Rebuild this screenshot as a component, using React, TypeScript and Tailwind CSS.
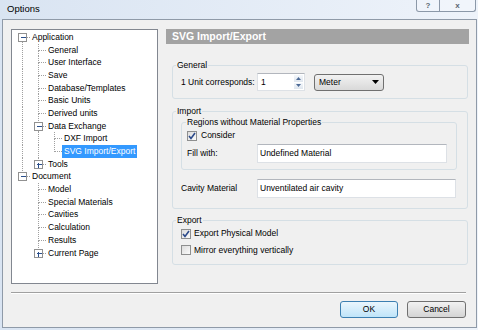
import React from 'react'

type Row = {
  label: string
  guides: boolean[]
  top: boolean
  bottom: boolean
  exp?: '+' | '-'
  selected?: boolean
}

const rows: Row[] = [
  { label: 'Application', guides: [], top: false, bottom: true, exp: '-' },
  { label: 'General', guides: [true], top: true, bottom: true },
  { label: 'User Interface', guides: [true], top: true, bottom: true },
  { label: 'Save', guides: [true], top: true, bottom: true },
  { label: 'Database/Templates', guides: [true], top: true, bottom: true },
  { label: 'Basic Units', guides: [true], top: true, bottom: true },
  { label: 'Derived units', guides: [true], top: true, bottom: true },
  { label: 'Data Exchange', guides: [true], top: true, bottom: true, exp: '-' },
  { label: 'DXF Import', guides: [true, true], top: true, bottom: true },
  { label: 'SVG Import/Export', guides: [true, true], top: true, bottom: false, selected: true },
  { label: 'Tools', guides: [true], top: true, bottom: false, exp: '+' },
  { label: 'Document', guides: [], top: true, bottom: false, exp: '-' },
  { label: 'Model', guides: [false], top: true, bottom: true },
  { label: 'Special Materials', guides: [false], top: true, bottom: true },
  { label: 'Cavities', guides: [false], top: true, bottom: true },
  { label: 'Calculation', guides: [false], top: true, bottom: true },
  { label: 'Results', guides: [false], top: true, bottom: true },
  { label: 'Current Page', guides: [false], top: true, bottom: false, exp: '+' },
]

const COL = 16

// dotted tree connectors + expander box for one row
const Connector = ({ row }: { row: Row }) => {
  const depth = row.guides.length
  const w = COL * (depth + 1)
  const cx = depth * COL + 8.5
  const dot = { stroke: '#a0a0a0', strokeDasharray: '1 1' }
  return (
    <svg width={w} height={13} viewBox={`0 0 ${w} 13`} className="shrink-0" shapeRendering="crispEdges">
      {row.guides.map((g, i) =>
        g ? <line key={i} x1={i * COL + 8.5} y1={0} x2={i * COL + 8.5} y2={13} {...dot} /> : null
      )}
      {row.top && <line x1={cx} y1={0} x2={cx} y2={6.5} {...dot} />}
      {row.bottom && <line x1={cx} y1={6.5} x2={cx} y2={13} {...dot} />}
      <line x1={cx} y1={6.5} x2={w} y2={6.5} {...dot} />
      {row.exp && (
        <g>
          <rect x={cx - 4} y={2.5} width={8} height={8} fill="#fff" stroke="#919191" />
          <line x1={cx - 2} y1={6.5} x2={cx + 3} y2={6.5} stroke="#2b4f8c" />
          {row.exp === '+' && <line x1={cx} y1={4.5} x2={cx} y2={9.5} stroke="#2b4f8c" />}
        </g>
      )}
    </svg>
  )
}

const Check = ({ checked }: { checked?: boolean }) => (
  <div className="w-[10px] h-[10px] shrink-0 border border-[#8e8f8f] bg-gradient-to-br from-[#dcdcdc] to-[#fbfbfb] flex items-center justify-center">
    {checked && (
      <svg width="8" height="8" viewBox="0 0 8 8">
        <path d="M1 4 L3 6.5 L7 1" fill="none" stroke="#2c4a8a" strokeWidth="1.6" />
      </svg>
    )}
  </div>
)

const TextBox = ({ value, className }: { value: string; className: string }) => (
  <div className={`h-[19px] bg-white border border-[#dde1e6] border-t-[#b2b6bd] flex items-center pl-[2px] whitespace-nowrap ${className}`}>
    {value}
  </div>
)

export default function App() {
  return (
    <div className="w-[478px] h-[330px] overflow-hidden relative bg-gradient-to-r from-[#d9e4f2] to-[#eef3fa] font-['Liberation_Sans',Arial,sans-serif] text-[8.5px] text-black">
      {/* title bar */}
      <div className="h-[19px] flex items-center pl-[7px] text-[9.5px]">Options</div>
      <div className="absolute top-0 right-[2px] h-[12px] w-[60px] flex border border-t-0 border-[#8b98a8] rounded-b-[3px] bg-[#f3f6fb]/60 text-[#5b6672] font-bold text-[8px] leading-none">
        <div className="w-[23px] flex items-center justify-center border-r border-[#8b98a8]">?</div>
        <div className="flex-1 flex items-center justify-center">x</div>
      </div>

      {/* client area */}
      <div className="ml-[2px] w-[475px] h-[309px] border border-[#8f9aa8] bg-[#f0f0f0] pl-[8px] pt-[9px]">
        <div className="flex gap-[8px]">
          {/* tree */}
          <div className="w-[147px] h-[255px] bg-white border border-[#828790] pl-[2px] pt-[1px]">
            {rows.map((r) => (
              <div key={r.label} className="h-[12.7px] flex items-center">
                <Connector row={r} />
                <span
                  className={`px-[2px] leading-[13px] whitespace-nowrap ${r.selected ? 'bg-[#3399ff] text-white' : ''}`}
                >
                  {r.label}
                </span>
              </div>
            ))}
          </div>

          {/* page */}
          <div className="w-[303px] flex flex-col whitespace-nowrap">
            <div className="h-[15px] bg-[#a3a3a3] text-white font-bold text-[10.5px] pl-[6px] flex items-center">
              SVG Import/Export
            </div>

            <fieldset className="mt-[16px] ml-[6px] w-[296px] border border-[#d5dfe5] rounded-[3px] pb-[7px]">
              <legend className="ml-[3px] px-[1px] leading-[11px]">General</legend>
              <div className="flex items-center pl-[8px] pt-[2px]">
                <span className="w-[76px]">1 Unit corresponds:</span>
                <div className="w-[48px] h-[18px] bg-white border border-[#dde1e6] border-t-[#b2b6bd] flex items-center justify-between pl-[3px]">
                  <span>1</span>
                  <div className="w-[11px] h-full flex flex-col gap-[1px] p-[1px]">
                    <div className="flex-1 bg-gradient-to-b from-[#f4f7fb] to-[#dfe6ee] flex items-center justify-center">
                      <svg width="5" height="3" viewBox="0 0 5 3"><path d="M0 3 L2.5 0 L5 3Z" fill="#4d6a96" /></svg>
                    </div>
                    <div className="flex-1 bg-gradient-to-b from-[#f4f7fb] to-[#dfe6ee] flex items-center justify-center">
                      <svg width="5" height="3" viewBox="0 0 5 3"><path d="M0 0 L2.5 3 L5 0Z" fill="#4d6a96" /></svg>
                    </div>
                  </div>
                </div>
                <div className="ml-[9px] w-[70px] h-[17px] rounded-[3px] border border-[#707070] bg-gradient-to-b from-[#f2f2f2] to-[#d9d9d9] flex items-center justify-between pl-[4px] pr-[4px]">
                  <span>Meter</span>
                  <svg width="7" height="4" viewBox="0 0 7 4"><path d="M0 0 L7 0 L3.5 4Z" fill="#000" /></svg>
                </div>
              </div>
            </fieldset>

            <fieldset className="mt-[7px] ml-[6px] w-[296px] border border-[#d5dfe5] rounded-[3px] pb-[10px]">
              <legend className="ml-[3px] px-[1px] leading-[11px]">Import</legend>
              <fieldset className="ml-[8px] w-[276px] border border-[#d5dfe5] rounded-[3px] pb-[6px]">
                <legend className="ml-[4px] px-[1px] leading-[11px]">Regions without Material Properties</legend>
                <div className="flex items-center gap-[4px] pl-[5px] pt-[1px] h-[14px]">
                  <Check checked />
                  <span>Consider</span>
                </div>
                <div className="flex items-center pl-[5px] mt-[2px]">
                  <span className="w-[70px]">Fill with:</span>
                  <TextBox value="Undefined Material" className="w-[190px]" />
                </div>
              </fieldset>
              <div className="flex items-center pl-[8px] mt-[9px]">
                <span className="w-[76px]">Cavity Material</span>
                <TextBox value="Unventilated air cavity" className="w-[199px]" />
              </div>
            </fieldset>

            <fieldset className="mt-[6px] ml-[6px] w-[296px] border border-[#d5dfe5] rounded-[3px] pb-[7px]">
              <legend className="ml-[3px] px-[1px] leading-[11px]">Export</legend>
              <div className="flex items-center gap-[3px] pl-[8px] pt-[1px] h-[14px]">
                <Check checked />
                <span>Export Physical Model</span>
              </div>
              <div className="flex items-center gap-[3px] pl-[8px] mt-[3px] h-[14px]">
                <Check />
                <span>Mirror everything vertically</span>
              </div>
            </fieldset>
          </div>
        </div>

        {/* separator */}
        <div className="mt-[8px] w-[455px] border-t border-[#a0a0a0] border-b border-b-white" />

        {/* buttons */}
        <div className="mt-[7px] w-[455px] flex justify-end gap-[9px]">
          <button className="w-[58px] h-[17px] rounded-[3px] border border-[#3c7fb1] bg-gradient-to-b from-[#eaf6fd] to-[#bfe4f9] text-[8.5px]">
            OK
          </button>
          <button className="w-[59px] h-[17px] rounded-[3px] border border-[#707070] bg-gradient-to-b from-[#f2f2f2] to-[#d4d4d4] text-[8.5px]">
            Cancel
          </button>
        </div>
      </div>
    </div>
  )
}
